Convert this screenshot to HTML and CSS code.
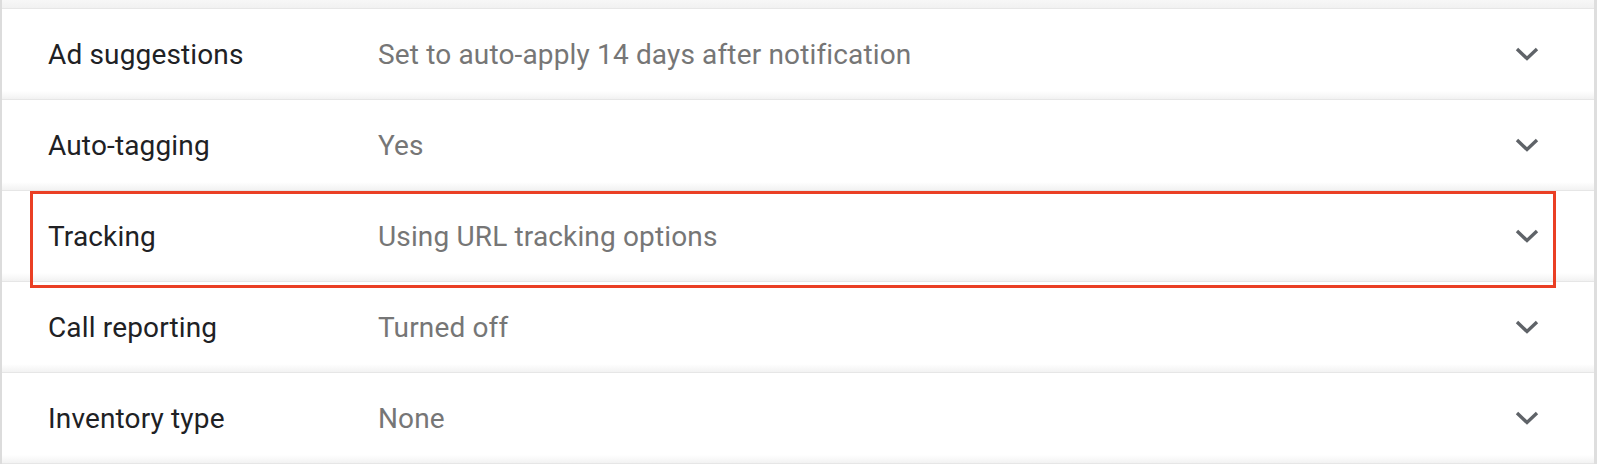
FILE: index.html
```html
<!DOCTYPE html>
<html lang="en">
<head>
  <meta charset="UTF-8">
  <title>Campaign settings</title>
  <link rel="stylesheet" href="styles.css">
</head>
<body>
<div class="settings">
  <div class="top-edge"></div>
  <div class="row">
    <div class="label">Ad suggestions</div>
    <div class="value">Set to auto-apply 14 days after notification</div>
    <svg class="chevron" width="24" height="14" viewBox="0 0 24 14"><polyline points="2,2 12,11.5 22,2" /></svg>
  </div>
  <div class="row">
    <div class="label">Auto-tagging</div>
    <div class="value">Yes</div>
    <svg class="chevron" width="24" height="14" viewBox="0 0 24 14"><polyline points="2,2 12,11.5 22,2" /></svg>
  </div>
  <div class="row highlighted">
    <div class="label">Tracking</div>
    <div class="value">Using URL tracking options</div>
    <svg class="chevron" width="24" height="14" viewBox="0 0 24 14"><polyline points="2,2 12,11.5 22,2" /></svg>
  </div>
  <div class="row">
    <div class="label">Call reporting</div>
    <div class="value">Turned off</div>
    <svg class="chevron" width="24" height="14" viewBox="0 0 24 14"><polyline points="2,2 12,11.5 22,2" /></svg>
  </div>
  <div class="row">
    <div class="label">Inventory type</div>
    <div class="value">None</div>
    <svg class="chevron" width="24" height="14" viewBox="0 0 24 14"><polyline points="2,2 12,11.5 22,2" /></svg>
  </div>
</div>
</body>
</html>
```

FILE: styles.css
```css
html, body {
  margin: 0;
  padding: 0;
  background: #fff;
}

body {
  font-family: Roboto, "Liberation Sans", Arial, sans-serif;
  width: 1600px;
  height: 468px;
  overflow: hidden;
}

.settings {
  width: 1592px;
  border-left: 2px solid #dcdcdc;
  border-right: 3px solid #dedede;
}

.top-edge {
  height: 8px;
  background: linear-gradient(to bottom, #f7f7f7, #f1f1f1);
  border-bottom: 1px solid #e6e6e6;
}

.row {
  position: relative;
  display: flex;
  align-items: center;
  height: 90px;
  padding: 0 55px 0 46px;
  background: linear-gradient(to bottom, #fff 0, #fff 82px, #f2f2f2 90px);
  border-bottom: 1px solid #e6e6e6;
}

.label {
  width: 330px;
  flex: none;
  font-size: 28px;
  letter-spacing: 0.15px;
  color: #202124;
}

.value {
  flex: 1;
  font-size: 28px;
  letter-spacing: 0.15px;
  color: #767676;
}

.chevron {
  flex: none;
}

.chevron polyline {
  fill: none;
  stroke: #5f6368;
  stroke-width: 3.4;
}

.row.highlighted {
  z-index: 2;
}

.row.highlighted::after {
  content: "";
  position: absolute;
  left: 28px;
  right: 38px;
  top: 0;
  bottom: -7px;
  border: 3px solid #ea3f24;
}
```
